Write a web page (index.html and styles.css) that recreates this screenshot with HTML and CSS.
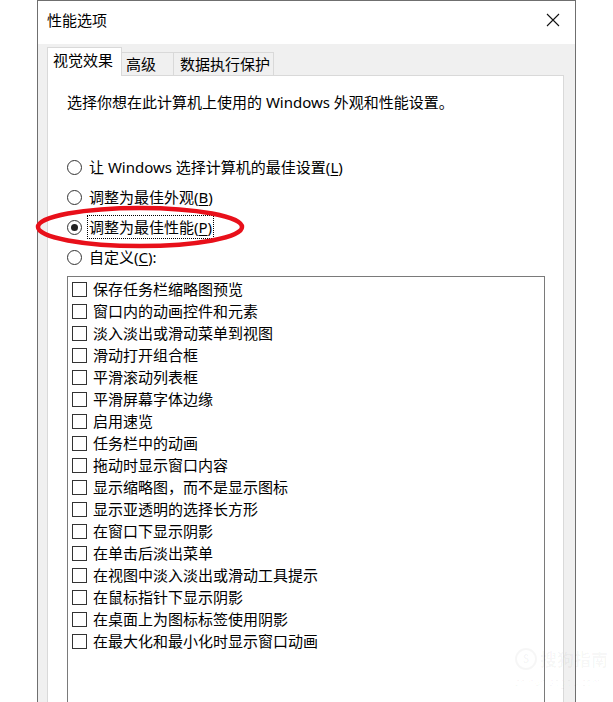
FILE: index.html
```html
<!DOCTYPE html>
<html lang="zh-CN">
<head>
<meta charset="utf-8">
<title>性能选项</title>
<link rel="stylesheet" href="styles.css">
</head>
<body>
<div class="window">
  <div class="titlebar">
    <span class="title">性能选项</span>
    <svg class="close" width="14" height="14" viewBox="0 0 14 14"><path d="M1 1 L13 13 M13 1 L1 13" stroke="#111" stroke-width="1.1" fill="none"/></svg>
  </div>
  <div class="dialog">
    <div class="tabs">
      <div class="tab active">视觉效果</div>
      <div class="tab">高级</div>
      <div class="tab">数据执行保护</div>
    </div>
    <div class="panel">
      <p class="desc">选择你想在此计算机上使用的 Windows 外观和性能设置。</p>
      <div class="radios">
        <div class="radio-row"><span class="radio"></span><span class="label">让 Windows 选择计算机的最佳设置(<u>L</u>)</span></div>
        <div class="radio-row"><span class="radio"></span><span class="label">调整为最佳外观(<u>B</u>)</span></div>
        <div class="radio-row"><span class="radio checked"></span><span class="label focus">调整为最佳性能(<u>P</u>)</span></div>
        <div class="radio-row"><span class="radio"></span><span class="label">自定义(<u>C</u>):</span></div>
      </div>
      <div class="listbox">
        <div class="check-row"><span class="box"></span>保存任务栏缩略图预览</div>
        <div class="check-row"><span class="box"></span>窗口内的动画控件和元素</div>
        <div class="check-row"><span class="box"></span>淡入淡出或滑动菜单到视图</div>
        <div class="check-row"><span class="box"></span>滑动打开组合框</div>
        <div class="check-row"><span class="box"></span>平滑滚动列表框</div>
        <div class="check-row"><span class="box"></span>平滑屏幕字体边缘</div>
        <div class="check-row"><span class="box"></span>启用速览</div>
        <div class="check-row"><span class="box"></span>任务栏中的动画</div>
        <div class="check-row"><span class="box"></span>拖动时显示窗口内容</div>
        <div class="check-row"><span class="box"></span>显示缩略图，而不是显示图标</div>
        <div class="check-row"><span class="box"></span>显示亚透明的选择长方形</div>
        <div class="check-row"><span class="box"></span>在窗口下显示阴影</div>
        <div class="check-row"><span class="box"></span>在单击后淡出菜单</div>
        <div class="check-row"><span class="box"></span>在视图中淡入淡出或滑动工具提示</div>
        <div class="check-row"><span class="box"></span>在鼠标指针下显示阴影</div>
        <div class="check-row"><span class="box"></span>在桌面上为图标标签使用阴影</div>
        <div class="check-row"><span class="box"></span>在最大化和最小化时显示窗口动画</div>
      </div>
    </div>
  </div>
</div>
<svg class="mark" width="613" height="702" viewBox="0 0 613 702">
  <ellipse cx="140" cy="227" rx="102" ry="19" fill="none" stroke="#e8101a" stroke-width="4.5"/>
</svg>
<div class="watermark">
  <div class="wm-top"><span class="wm-logo">S</span><span>搜狗指南</span></div>
  <div class="wm-url">zhinan.sogou.com</div>
</div>
</body>
</html>
```

FILE: styles.css
```css
html, body {
  margin: 0;
  padding: 0;
  background: #ffffff;
  overflow: hidden;
  width: 613px;
  height: 702px;
}
body {
  position: relative;
  font-family: "Noto Sans", "Noto Sans CJK SC", sans-serif;
  font-size: 15px;
  color: #000;
}
.window {
  margin-left: 37px;
  width: 537px;
  height: 760px;
  border-left: 1px solid #6f6f6f;
  border-right: 1px solid #6f6f6f;
  border-top: 1px solid #6f6f6f;
  background: #f0f0f0;
}
.titlebar {
  height: 43px;
  background: #fff;
  display: flex;
  align-items: center;
  justify-content: space-between;
  padding: 0 15px 0 9px;
}
.title {
  font-size: 15px;
  line-height: 20px;
  margin-top: -6px;
}
.close {
  margin-top: -6px;
}
.dialog {
  padding: 3px 11px 0 9px;
}
.tabs {
  display: flex;
  align-items: flex-end;
  height: 28px;
  position: relative;
  z-index: 1;
}
.tab {
  height: 23px;
  line-height: 22px;
  padding: 0 0 0 6px;
  border: 1px solid #d9d9d9;
  border-bottom: none;
  border-left: none;
  background: #f0f0f0;
  box-sizing: border-box;
  white-space: nowrap;
  overflow: hidden;
}
.tab:nth-child(2) { width: 52px; padding-left: 4px; }
.tab:nth-child(3) { width: 100px; }
.tab.active {
  width: 75px;
  line-height: 24px;
  background: #fff;
  border-left: 1px solid #d9d9d9;
  padding: 0 0 0 5px;
  margin-bottom: -1px;
  height: 29px;
}
.panel {
  background: #fff;
  border: 1px solid #d9d9d9;
  padding: 16px 17px 0 19px;
  height: 680px;
}
.desc {
  margin: 0;
  line-height: 20px;
}
.radios {
  margin-top: 40px;
  display: flex;
  flex-direction: column;
}
.radio-row {
  height: 30px;
  display: flex;
  align-items: center;
}
.radio {
  width: 15px;
  height: 15px;
  border: 1px solid #333;
  border-radius: 50%;
  box-sizing: border-box;
  margin-left: 0;
  margin-right: 5px;
  position: relative;
  background: #fff;
}
.radio.checked::after {
  content: "";
  position: absolute;
  left: 3px;
  top: 3px;
  width: 7px;
  height: 7px;
  border-radius: 50%;
  background: #222;
}
.label {
  line-height: 20px;
  padding: 1px 1px;
  border: 1px dotted transparent;
}
.label.focus {
  border-color: #000;
}
.label u {
  text-decoration-thickness: 1px;
  text-underline-offset: 2px;
}
.listbox {
  margin-top: 4px;
  border: 1px solid #7a7a7a;
  padding-top: 1px;
  height: 480px;
  width: 476px;
}
.check-row {
  height: 22px;
  display: flex;
  align-items: center;
  line-height: 20px;
  padding-left: 4px;
}
.box {
  width: 15px;
  height: 15px;
  border: 1px solid #333;
  box-sizing: border-box;
  margin-right: 6px;
  background: #fff;
}
.mark {
  position: absolute;
  left: 0;
  top: 0;
  pointer-events: none;
}
.watermark {
  position: absolute;
  left: 515px;
  top: 646px;
  color: rgba(0, 0, 0, 0.035);
  pointer-events: none;
}
.wm-top {
  display: flex;
  align-items: center;
  gap: 3px;
  font-size: 17px;
  font-weight: bold;
}
.wm-logo {
  width: 18px;
  height: 18px;
  border-radius: 50%;
  border: 2px solid rgba(0, 0, 0, 0.035);
  font-size: 12px;
  line-height: 18px;
  text-align: center;
}
.wm-url {
  font-size: 10px;
  margin-top: 4px;
}
```
